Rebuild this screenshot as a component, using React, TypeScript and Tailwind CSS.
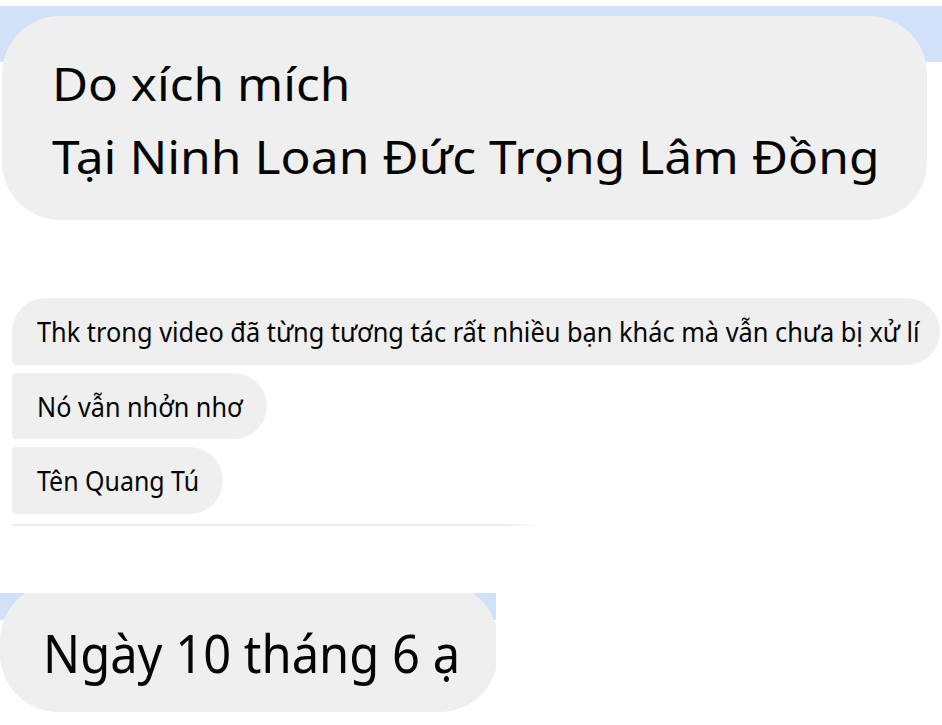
import React from "react";

export default function App() {
  return (
    <div className="relative w-[942px] h-[725px] overflow-hidden bg-white text-[#050505] [font-family:'Noto_Sans',sans-serif]">
      <section className="pt-[16px] bg-[linear-gradient(to_bottom,#ffffff_0px,#ffffff_6px,#d2e1fa_6px,#d2e1fa_62px,#ffffff_62px)]">
        <div className="ml-[2px] w-[925px] h-[204px] rounded-[58px] bg-[#efefef] pl-[50px] pt-[31px] text-[46px] leading-[73px]">
          <div className="whitespace-nowrap">
            <span className="inline-block origin-left scale-x-[1.075]">Do xích mích</span>
          </div>
          <div className="whitespace-nowrap">
            <span className="inline-block origin-left scale-x-[1.082]">Tại Ninh Loan Đức Trọng Lâm Đồng</span>
          </div>
        </div>
      </section>
      <div className="mt-[78px] ml-[12px] flex flex-col items-start gap-[8px] text-[28px]">
        <div className="w-[928px] h-[67px] leading-[67px] pl-[25px] bg-[#efefef] rounded-tl-[34px] rounded-bl-[4px] rounded-r-[34px] whitespace-nowrap">
          <span className="inline-block origin-left scale-x-[0.905]">Thk trong video đã từng tương tác rất nhiều bạn khác mà vẫn chưa bị xử lí</span>
        </div>
        <div className="w-[255px] h-[66px] leading-[66px] pl-[25px] bg-[#efefef] rounded-l-[4px] rounded-r-[34px] whitespace-nowrap">
          <span className="inline-block origin-left scale-x-[0.9]">Nó vẫn nhởn nhơ</span>
        </div>
        <div className="w-[211px] h-[67px] leading-[67px] pl-[25px] bg-[#efefef] rounded-l-[4px] rounded-r-[34px] whitespace-nowrap">
          <span className="inline-block origin-left scale-x-[0.89]">Tên Quang Tú</span>
        </div>
      </div>
      <div className="mt-[10px] ml-[12px] w-[526px] h-[2px] bg-[linear-gradient(to_right,#ebebeb_0%,#ebebeb_94%,rgba(235,235,235,0)_100%)]" />
      <div className="mt-[67px] w-[496px] h-[132px] overflow-hidden bg-[linear-gradient(to_bottom,#d2e1fa_0px,#d2e1fa_27px,#ffffff_27px)]">
        <div className="-mt-[10px] w-[498px] h-[129px] rounded-[58px] bg-[#efefef] pl-[43px] pt-[40px] text-[53px] leading-[60px] whitespace-nowrap">
          <span className="inline-block origin-left scale-x-[0.922]">Ngày 10 tháng 6 ạ</span>
        </div>
      </div>
    </div>
  );
}
